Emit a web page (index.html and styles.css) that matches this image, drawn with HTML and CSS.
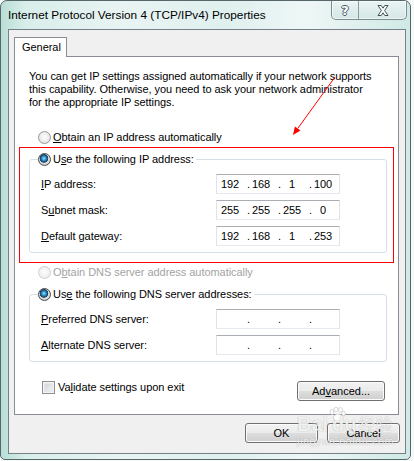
FILE: index.html
```html
<!DOCTYPE html>
<html lang="en">
<head>
<meta charset="UTF-8">
<title>Internet Protocol Version 4 (TCP/IPv4) Properties</title>
<link rel="stylesheet" href="styles.css">
</head>
<body>
    <div class="window">
        <div class="titlebar">
            <span class="title">Internet Protocol Version 4 (TCP/IPv4) Properties</span>
            <div class="caption-btns">
                <span class="cbtn help">?</span>
                <span class="cbtn close">
                    <svg width="12" height="11" viewBox="0 0 12 11"><path d="M1 0.5H4.2L6 3.2L7.8 0.5H11L7.6 5.5L11 10.5H7.8L6 7.8L4.2 10.5H1L4.4 5.5Z" fill="#fff" stroke="#435258" stroke-width="1"/></svg>
                </span>
            </div>
        </div>
        <div class="client">
            <div class="tabs"><div class="tab">General</div></div>
            <div class="panel">
                <p class="desc">You can get IP settings assigned automatically if your network supports<br>this capability. Otherwise, you need to ask your network administrator<br>for the appropriate IP settings.</p>

                <div class="option first"><span class="radio"></span><span><u>O</u>btain an IP address automatically</span></div>

                <div class="highlight">
                    <fieldset class="group">
                        <legend class="option"><span class="radio on"></span><span>U<u>s</u>e the following IP address:</span></legend>
                        <div class="field">
                            <label><u>I</u>P address:</label>
                            <div class="ipbox"><span class="oct">192</span><span class="dot">.</span><span class="oct">168</span><span class="dot">.</span><span class="oct">1</span><span class="dot">.</span><span class="oct">100</span></div>
                        </div>
                        <div class="field">
                            <label>S<u>u</u>bnet mask:</label>
                            <div class="ipbox"><span class="oct">255</span><span class="dot">.</span><span class="oct">255</span><span class="dot">.</span><span class="oct">255</span><span class="dot">.</span><span class="oct">0</span></div>
                        </div>
                        <div class="field">
                            <label><u>D</u>efault gateway:</label>
                            <div class="ipbox"><span class="oct">192</span><span class="dot">.</span><span class="oct">168</span><span class="dot">.</span><span class="oct">1</span><span class="dot">.</span><span class="oct">253</span></div>
                        </div>
                    </fieldset>
                </div>

                <div class="option disabled"><span class="radio"></span><span>O<u>b</u>tain DNS server address automatically</span></div>

                <fieldset class="group dns">
                    <legend class="option"><span class="radio on"></span><span>Us<u>e</u> the following DNS server addresses:</span></legend>
                    <div class="field">
                        <label><u>P</u>referred DNS server:</label>
                        <div class="ipbox"><span class="oct"></span><span class="dot">.</span><span class="oct"></span><span class="dot">.</span><span class="oct"></span><span class="dot">.</span><span class="oct"></span></div>
                    </div>
                    <div class="field">
                        <label><u>A</u>lternate DNS server:</label>
                        <div class="ipbox"><span class="oct"></span><span class="dot">.</span><span class="oct"></span><span class="dot">.</span><span class="oct"></span><span class="dot">.</span><span class="oct"></span></div>
                    </div>
                </fieldset>

                <div class="bottom-row">
                    <label class="check"><span class="box"></span><span>Va<u>l</u>idate settings upon exit</span></label>
                    <button class="btn adv">Ad<u>v</u>anced...</button>
                </div>
            </div>
            <div class="actions">
                <button class="btn">OK</button>
                <button class="btn">Cancel</button>
            </div>
        </div>
    </div>

    <!-- red annotation arrow -->
    <svg class="arrow" width="414" height="461">
        <line x1="335" y1="77" x2="297.7" y2="128.5" stroke="#f00" stroke-width="1"/>
        <polygon points="293,135 300.5,130.6 294.9,126.4" fill="#f00"/>
    </svg>

    <div class="watermark">
        <div class="wm-logo">Bai<span class="paw"><svg width="18" height="16" viewBox="0 0 18 16"><ellipse cx="4" cy="5" rx="2" ry="2.6" fill="#fff" stroke="#bbb" stroke-width=".6"/><ellipse cx="8" cy="2.6" rx="2" ry="2.4" fill="#fff" stroke="#bbb" stroke-width=".6"/><ellipse cx="12.5" cy="3" rx="2" ry="2.4" fill="#fff" stroke="#bbb" stroke-width=".6"/><ellipse cx="15.5" cy="6.5" rx="1.8" ry="2.3" fill="#fff" stroke="#bbb" stroke-width=".6"/><ellipse cx="10" cy="11" rx="4.5" ry="4" fill="#fff" stroke="#bbb" stroke-width=".6"/></svg></span>du<span class="cjk">经验</span></div>
        <div class="wm-url">jingyan.baidu.com</div>
    </div>
</body>
</html>
```

FILE: styles.css
```css
body {
    margin: 0;
    width: 414px;
    height: 461px;
    overflow: hidden;
    position: relative;
    background: #f7f9f9;
    font-family: "Liberation Sans", Arial, sans-serif;
    font-size: 11px;
    letter-spacing: -0.05px;
    color: #000;
}
u {
    text-decoration: underline;
    text-underline-offset: 1px;
}
.window {
    width: 411px;
    height: 460px;
    box-sizing: border-box;
    border: 1px solid #56676b;
    border-radius: 7px 7px 5px 5px;
    padding: 0 4px 5px 7px;
    display: flex;
    flex-direction: column;
    background: linear-gradient(to right, #b8ded6 0%, #d9eeeb 6%, #e8f4f3 30%, #dff0ef 55%, #eef7f6 75%, #cfe9e5 100%);
}
.titlebar {
    height: 28px;
    display: flex;
    justify-content: space-between;
    align-items: flex-start;
}
.title {
    font-size: 11.8px;
    letter-spacing: 0;
    line-height: 28px;
    color: #000;
}
.caption-btns {
    display: flex;
    height: 18px;
    margin-right: -1px;
    border: 1px solid #7d8c90;
    border-top: none;
    border-radius: 0 0 5px 5px;
    background: linear-gradient(#eaf4f4, #d4e7e6);
    box-shadow: inset 0 0 0 1px rgba(255,255,255,.6);
}
.cbtn {
    display: flex;
    align-items: center;
    justify-content: center;
}
.help {
    width: 26px;
    border-right: 1px solid #8a9a9e;
    font-family: "DejaVu Sans", sans-serif;
    font-weight: bold;
    font-size: 13px;
    color: #fff;
    text-shadow: 1px 0 0 #4a5a60, -1px 0 0 #4a5a60, 0 1px 0 #4a5a60, 0 -1px 0 #4a5a60;
}
.close {
    width: 47px;
}
.client {
    flex: 1;
    border: 1px solid #75808a;
    background: #f0f0f0;
    padding: 7px 6px 0 5px;
}
.tabs {
    display: flex;
}
.tab {
    position: relative;
    z-index: 1;
    height: 20px;
    width: 53px;
    padding-left: 7px;
    box-sizing: border-box;
    margin-bottom: -1px;
    border: 1px solid #898c95;
    border-bottom: none;
    background: #fff;
    line-height: 19px;
}
.panel {
    height: 359px;
    box-sizing: border-box;
    border: 1px solid #898c95;
    background: #fff;
    padding-top: 13px;
}
.desc {
    margin: 0 0 0 14px;
    line-height: 13px;
}
.option {
    display: flex;
    align-items: center;
    height: 16px;
    line-height: 16px;
    white-space: nowrap;
}
.option.first {
    margin: 20px 0 0 23px;
}
.option.disabled {
    margin: 1px 0 0 23px;
    color: #a3a3a3;
}
.radio {
    width: 13px;
    height: 13px;
    box-sizing: border-box;
    border-radius: 50%;
    border: 1px solid #979797;
    margin-right: 2px;
    background: radial-gradient(circle at 50% 45%, #fdfdfd 0, #ececec 55%, #d2d2d2 100%);
}
.radio.on {
    border-color: #4b4b4b;
    background:
        radial-gradient(circle at 45% 40%, #a6e0f8 0, #3a9bd3 1.8px, #17659d 3px, #1f3f58 4px, transparent 4.6px),
        radial-gradient(circle at 50% 45%, #f4f4f4 0, #d8d8d8 60%, #b8b8b8 100%);
}
.disabled .radio {
    border-color: #cfcfcf;
    background: radial-gradient(circle at 50% 45%, #fcfcfc 0, #f1f1f1 60%, #e6e6e6 100%);
}
.highlight {
    margin: 2px 4px 0 4px;
    border: 1px solid #f00;
    padding: 3px 0 9px 0;
}
.group {
    margin: 0 6px 0 9px;
    padding: 7px 0 6px 0;
    border: 1px solid #d5dfe5;
    border-radius: 3px;
    min-inline-size: 0;
}
.group legend {
    margin-left: 8px;
    padding: 0 2px 0 0;
}
.group.dns {
    margin: 6px 11px 0 14px;
}
.field {
    display: flex;
    align-items: center;
    height: 20px;
    margin-left: 11px;
}
.field + .field {
    margin-top: 6px;
}
.field label {
    width: 175px;
    line-height: 20px;
}
.ipbox {
    display: flex;
    width: 124px;
    height: 20px;
    box-sizing: border-box;
    padding-left: 2px;
    border: 1px solid #e2e3ea;
    border-top-color: #abadb3;
    border-bottom-color: #e3e9ef;
    background: #fff;
    line-height: 18px;
}
.oct {
    width: 22px;
    text-align: center;
}
.dot {
    width: 9px;
    text-align: right;
}
.bottom-row {
    display: flex;
    justify-content: space-between;
    align-items: flex-start;
    margin-top: 19px;
    padding: 0 13px 0 27px;
}
.check {
    display: flex;
    align-items: center;
    height: 13px;
    line-height: 13px;
}
.box {
    width: 13px;
    height: 13px;
    box-sizing: border-box;
    border: 1px solid #8e8f8f;
    margin-right: 3px;
    background: linear-gradient(135deg, #cbcfd5, #f7f7f7);
    box-shadow: inset 0 0 0 1px #f4f4f4, inset 0 0 0 2px #e4e6e9;
}
.btn {
    height: 20px;
    padding: 0;
    border: 1px solid #707070;
    border-radius: 3px;
    background: linear-gradient(#f2f2f2 0%, #ebebeb 48%, #dddddd 52%, #cfcfcf 100%);
    box-shadow: inset 0 0 0 1px #fbfbfb;
    font-family: "Liberation Sans", Arial, sans-serif;
    font-size: 11px;
    color: #000;
}
.btn.adv {
    width: 88px;
}
.actions {
    display: flex;
    justify-content: flex-end;
    gap: 9px;
    margin: 8px -1px 0 0;
}
.actions .btn {
    width: 73px;
}
.arrow {
    position: absolute;
    left: 0;
    top: 0;
    pointer-events: none;
}
.watermark {
    position: absolute;
    left: 297px;
    top: 405px;
    color: rgba(255,255,255,.85);
    text-shadow: 0 0 1px rgba(0,0,0,.35);
    pointer-events: none;
}
.wm-logo {
    display: flex;
    align-items: flex-end;
    font-size: 20px;
    font-weight: bold;
    line-height: 22px;
    height: 30px;
}
.paw {
    display: inline-block;
    width: 4px;
    align-self: flex-start;
}
.cjk {
    font-family: "Noto Sans CJK SC", sans-serif;
    font-size: 17px;
    font-weight: normal;
    margin-left: 2px;
}
.wm-url {
    font-size: 11px;
    letter-spacing: 0.5px;
    line-height: 12px;
}
```
